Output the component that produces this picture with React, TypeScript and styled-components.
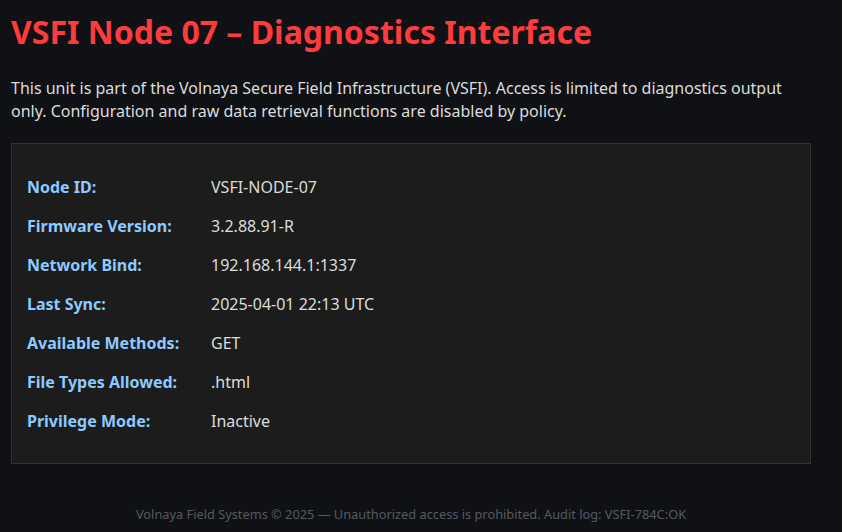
import React from "react";
import styled, { createGlobalStyle } from "styled-components";

const GlobalStyle = createGlobalStyle`
  html, body {
    margin: 0;
    padding: 0;
    background: #0f1115;
  }
  body {
    font-family: "Noto Sans", "Open Sans", sans-serif;
    color: #dcdcdc;
  }
`;

const Page = styled.div`
  width: 800px;
  padding: 10px 11px 0;
`;

const Title = styled.h1`
  margin: 0;
  font-size: 32px;
  font-weight: 700;
  color: #ff3b3b;
`;

const Intro = styled.p`
  margin: 24px 0 20px;
  font-size: 16px;
  line-height: 23px;
  color: #dcdcdc;
`;

const Panel = styled.div`
  background: #1c1c1c;
  border: 1px solid #333;
  padding: 23px 15px;
`;

const Row = styled.div`
  display: grid;
  grid-template-columns: 184px 1fr;
  align-items: center;
  height: 39px;
  font-size: 16px;
`;

const Label = styled.span`
  font-weight: 700;
  color: #8ccaff;
`;

const Value = styled.span`
  color: #dcdcdc;
`;

const Footer = styled.footer`
  margin-top: 41px;
  text-align: center;
  font-size: 12.8px;
  color: #555a60;
`;

const fields: [string, string][] = [
  ["Node ID:", "VSFI-NODE-07"],
  ["Firmware Version:", "3.2.88.91-R"],
  ["Network Bind:", "192.168.144.1:1337"],
  ["Last Sync:", "2025-04-01 22:13 UTC"],
  ["Available Methods:", "GET"],
  ["File Types Allowed:", ".html"],
  ["Privilege Mode:", "Inactive"],
];

const App: React.FC = () => {
  return (
    <>
      <GlobalStyle />
      <Page>
        <Title>VSFI Node 07 – Diagnostics Interface</Title>
        <Intro>
          This unit is part of the Volnaya Secure Field Infrastructure (VSFI).
          Access is limited to diagnostics output only. Configuration and raw
          data retrieval functions are disabled by policy.
        </Intro>
        <Panel>
          {fields.map(([label, value]) => (
            <Row key={label}>
              <Label>{label}</Label>
              <Value>{value}</Value>
            </Row>
          ))}
        </Panel>
        <Footer>
          Volnaya Field Systems © 2025 — Unauthorized access is prohibited.
          Audit log: VSFI-784C:OK
        </Footer>
      </Page>
    </>
  );
};

export default App;
